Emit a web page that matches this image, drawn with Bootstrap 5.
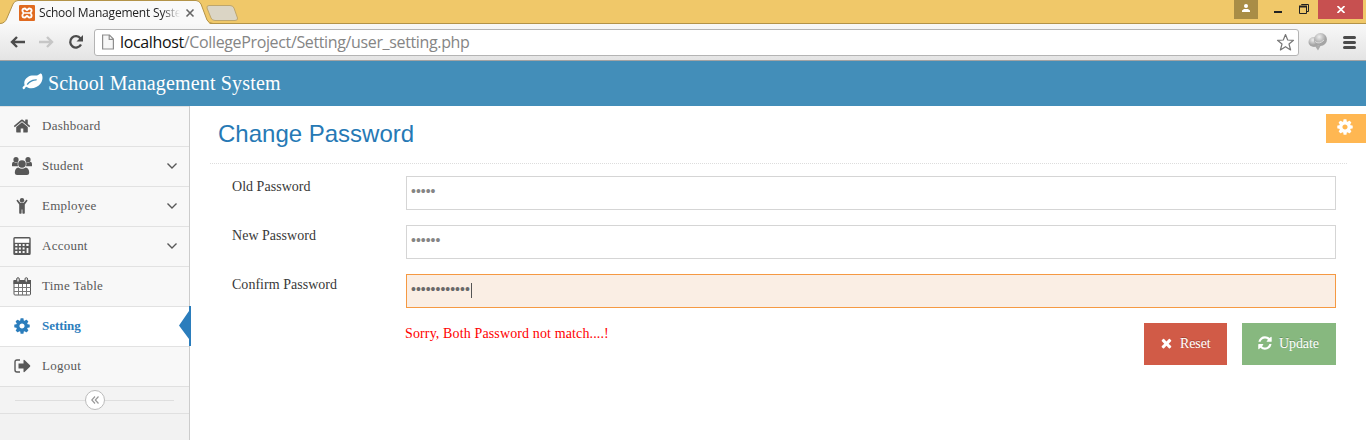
<!DOCTYPE html>
<html lang="en">
<head>
<meta charset="utf-8">
<title>School Management System</title>
<meta name="viewport" content="width=device-width, initial-scale=1">
<link href="https://cdn.jsdelivr.net/npm/bootstrap@5.3.0/dist/css/bootstrap.min.css" rel="stylesheet">
<style>
body{font-family:"Liberation Serif",serif;font-size:14px;line-height:20px;color:#393939;height:440px;overflow:hidden}
svg{display:block;flex:none}
.ui-font{font-family:"Open Sans",sans-serif}
.titlebar{height:24px;background:#f0c869}
.tab-art{top:0;left:0}
.tab-label{width:142px;margin-left:4px;font-size:12px;letter-spacing:-.2px;line-height:26px;color:#222;white-space:nowrap;overflow:hidden;-webkit-mask-image:linear-gradient(90deg,#000 123px,transparent 141px)}
.win-user{width:24px;height:19px;background:#a98d46;margin-right:16px}
.win-close{width:45px;height:19px;background:#c75050;margin:0 3px 0 -16px}
.toolbar{height:37px;background:linear-gradient(#f8f8f8,#e4e4e4);border-bottom:1px solid #a3a3a3;padding:0 9px 0 9px}
.address{height:27px;border:1px solid #b4b4b4;border-radius:3px;background:#fff;margin-left:10px;padding:0 3px 0 7px}
.address-text{font-size:16px;letter-spacing:-.36px;color:#858585;margin-left:6px;line-height:24px}
.address-text b{font-weight:400;color:#111}
.brandbar{height:45px;background:#438eb9;color:#fff;padding:0 0 1px 22px}
.brandbar span{font-size:20px;letter-spacing:.16px;margin-left:6px}
.sidebar{width:190px;background:#f2f2f2;border-right:1px solid #ccc;flex:none}
.side-link{height:40px;border-top:1px solid #e2e2e2;background:#f8f8f8;color:#585858;padding:0 11px 1px;font-size:13px;letter-spacing:.24px;text-decoration:none}
.side-link .ico{width:22px;margin-right:9px;display:flex;justify-content:center}
.side-link.current{background:#fff;color:#2b7dbc;font-weight:700;letter-spacing:-.05px}
.side-mark{right:-2px;top:-1px}
.collapse-row{height:28px;border-top:1px solid #e0e0e0;border-bottom:1px solid #e0e0e0;background:#f3f3f3;padding:0 15px}
.collapse-row i{height:1px;background:#dedede;flex:1}
.collapse-btn{width:20px;height:20px;border:1px solid #bbb;border-radius:50%;background:#fff}
.gear-btn{width:40px;height:29px;background:#ffb752;right:0;top:8px}
.page-head{height:58px;margin:0 19px 0 20px;padding:13px 8px 0;border-bottom:1px dotted #ddd}
.page-head h1{font-family:"Liberation Sans",sans-serif;font-size:24px;line-height:30px;color:#2679b5;font-weight:400;margin:0}
.pw-form{padding:12px 30px 0 42px}
.pw-row{height:34px;margin-bottom:15px}
.pw-row label{width:174px;padding-top:1px;letter-spacing:.03px;flex:none}
.pw-input.form-control{height:34px;border:1px solid #d5d5d5;border-radius:0;padding:0 4px 4px 4px;font:14px "Liberation Sans",sans-serif;color:#858585;box-shadow:none}
.pw-input.form-control.active-field{border-color:#f59942;background:#faeee4;color:#696969}
.caret{left:65px;top:9px;width:1px;height:15px;background:#555}
.error-text{color:#f00;padding:1px 0 0 173px;letter-spacing:.13px;flex:1}
.act{height:42px;border:0;border-radius:0;color:#fff;font-size:14px;letter-spacing:-.1px;padding:0 16px 2px;text-shadow:0 -1px 0 rgba(0,0,0,.25)}
.act-reset,.act-reset:hover{background:#d15b47;color:#fff;width:83px}
.act-update,.act-update:hover{background:#87b87f;color:#fff;width:94px;margin-left:15px}
</style>
</head>
<body class="bg-white d-flex flex-column">
<svg width="0" height="0" class="position-absolute"><defs>
<path id="cog" d="M1152 896q0-106-75-181t-181-75-181 75-75 181 75 181 181 75 181-75 75-181zm512-109v222q0 12-8 23t-20 13l-185 28q-19 54-39 91 35 50 107 138 10 12 10 25t-9 23q-27 37-99 108t-94 71q-12 0-26-9l-138-108q-44 23-91 38-16 136-29 186-7 28-36 28h-222q-14 0-24.500-8.500t-11.500-21.500l-28-184q-49-16-90-37l-141 107q-10 9-25 9-14 0-25-11-126-114-165-168-7-10-7-23 0-12 8-23 15-21 51-66.500t54-70.500q-27-50-41-99l-183-27q-13-2-21-12.500t-8-23.500v-222q0-12 8-23t19-13l186-28q14-46 39-92-40-57-107-138-10-12-10-24 0-10 9-23 26-36 98.500-107.500t94.500-71.500q13 0 26 10l138 107q44-23 91-38 16-136 29-186 7-28 36-28h222q14 0 24.500 8.500t11.500 21.500l28 184q49 16 90 37l142-107q9-9 24-9 13 0 25 10 129 119 165 170 7 8 7 22 0 12-8 23-15 21-51 66.500t-54 70.500q26 50 41 98l183 28q13 2 21 12.500t8 23.500z"/>
<path id="chev" d="M1.500 1.500 6 6 10.500 1.500" fill="none" stroke="#585858" stroke-width="1.400"/>
</defs></svg>

<header class="ui-font">
  <div class="titlebar d-flex align-items-start position-relative">
    <svg class="position-absolute tab-art" width="1366" height="26" viewBox="0 0 1366 26">
      <path d="M0 23.500H1366" stroke="#b39348"/>
      <path d="M0 25V23.500Q5 23.500 7 18L13 4Q14.500.5 18 .5H196Q199 .5 201 4L207 20Q209 24.500 213 24.500V26H0Z" fill="#f9f9f9"/>
      <path d="M0 23.500Q5 23.500 7 18L13 4Q14.500.5 18 .5H196Q199 .5 201 4L207 20Q209 23.500 213 23.500" fill="none" stroke="#b39348"/>
      <path d="M209 5.500H230Q233 5.500 234 8L237.500 18Q238 20.500 235 20.500H215Q212 20.500 211 18L207 8Q206.500 5.500 209 5.500Z" fill="#dbd5c5" stroke="#bea66c"/>
    </svg>
    <div class="d-flex align-items-center position-relative w-100">
      <svg width="16" height="16" viewBox="0 0 16 16" style="margin-left:19px"><rect width="16" height="16" rx="1" fill="#e06a20"/><path d="M5.500 3.500C3 3.500 2.500 6.500 5 8 2.500 9.500 3 12.500 5.500 12.500 7 12.500 7 11 8 11S9 12.500 10.500 12.500C13 12.500 13.500 9.500 11 8 13.500 6.500 13 3.500 10.500 3.500 9 3.500 9 5 8 5S7 3.500 5.500 3.500Z" fill="none" stroke="#fff" stroke-width="1.900"/><path d="M6 8H10" stroke="#fff" stroke-width="1.500"/></svg>
      <span class="tab-label">School Management System</span>
      <svg width="10" height="10" viewBox="0 0 10 10" style="margin-left:4px"><path d="M1.500 1.500 8.500 8.500M8.500 1.500 1.500 8.500" stroke="#666" stroke-width="1.600"/></svg>
      <div class="d-flex ms-auto align-self-start">
        <div class="win-user d-flex justify-content-center pt-1"><svg width="10" height="9" viewBox="0 0 10 9" fill="#fff"><circle cx="5" cy="2" r="2"/><path d="M1 8V6.500L3 5H7L9 6.500V8Z"/></svg></div>
        <svg width="60" height="19" viewBox="0 0 60 19" fill="none" stroke="#222"><path d="M0 12H8" stroke-width="2"/><path d="M25.500 6.500H32.500V13.500H25.500Z" stroke-width="1"/><path d="M25 6.500H33" stroke-width="2"/><path d="M27.500 5V4.500H34.500V11.500H33"/></svg>
        <div class="win-close d-flex justify-content-center align-items-center"><svg width="8" height="7" viewBox="0 0 8 7"><path d="M.5 0 7.500 7M7.500 0 .5 7" stroke="#fff" stroke-width="1.700"/></svg></div>
      </div>
    </div>
  </div>
  <div class="toolbar d-flex align-items-center position-relative">
    <svg width="75" height="18" viewBox="0 0 75 18" fill="none"><path d="M16 9H3M8 4 3 9 8 14" stroke="#4c4c4c" stroke-width="2.400"/><path d="M30 9H43M38 4 43 9 38 14" stroke="#c6c6c6" stroke-width="2.400"/><path d="M71.500 5.500A5.700 5.700 0 1 0 72 11.500" stroke="#4c4c4c" stroke-width="2.300"/><path d="M74 2V8.500H67.500Z" fill="#4c4c4c"/></svg>
    <div class="address d-flex align-items-center flex-grow-1">
      <svg width="12" height="16" viewBox="0 0 12 16"><path d="M.6 1H7.500L11.400 5V15H.6ZM7.200 1V5.300H11" fill="#f7f7f7" stroke="#8d8d8d" stroke-width="1.200"/></svg>
      <span class="address-text"><b>localhost</b>/CollegeProject/Setting/user_setting.php</span>
      <svg class="ms-auto" width="19" height="19" viewBox="0 0 19 19"><path d="M9.500 1.500 11.700 7 17.500 7.300 13 11 14.600 17 9.500 13.700 4.400 17 6 11 1.500 7.300 7.300 7Z" fill="#fff" stroke="#777" stroke-width="1.200" stroke-linejoin="round"/></svg>
    </div>
    <svg width="20" height="20" viewBox="0 0 20 20" style="margin-left:9px"><defs><radialGradient id="ball" cx=".4" cy=".3"><stop stop-color="#eee"/><stop offset="1" stop-color="#a5a5a5"/></radialGradient></defs><ellipse cx="6" cy="10" rx="5.500" ry="5" fill="url(#ball)"/><path d="M7 14 10 18.500 13 13Z" fill="#aaa"/><circle cx="12.500" cy="7.500" r="6.500" fill="url(#ball)"/><path d="M7 9.500Q11 13 16 8" stroke="#ddd" fill="none"/></svg>
    <svg width="13" height="13" viewBox="0 0 13 13" style="margin-left:15px;margin-right:1px"><path d="M1.500 1.500H11.500M1.500 6.500H11.500M1.500 11.500H11.500" stroke="#4b4b4b" stroke-width="3" stroke-linecap="round"/></svg>
  </div>
</header>

<nav class="brandbar d-flex align-items-center flex-shrink-0">
  <svg width="21" height="20" viewBox="0 90 1792 1792" fill="#fff"><path d="M1280 704q0-26-19-45t-45-19q-172 0-318 49.500t-259.500 134-235.500 219.500q-19 21-19 45 0 26 19 45t45 19q24 0 45-19 27-24 74-71t67-66q137-124 268.500-176t313.500-52q26 0 45-19t19-45zm512-198q0 95-20 193-46 224-184.500 383t-357.500 268q-214 108-438 108-148 0-286-47-15-5-88-42t-96-37q-16 0-39.500 32t-45 70-52.500 70-60 32q-43 0-63.500-17.500t-45.500-59.500q-2-4-6-11t-5.500-10-3-9.500-1.500-13.500q0-35 31-73.500t68-65.500 68-56 31-48q0-4-14-38t-16-44q-9-51-9-104 0-115 43.500-220t119-184.500 170.500-139 204-95.500q55-18 145-25.500t179.500-9 178.500-6 163.500-24 113.500-56.500l29.500-29.500 29.500-28 27-20 36.500-16 43.500-4.500q39 0 70.500 46t47.500 112 24 124 8 96z"/></svg>
  <span style="margin-left:5px">School Management System</span>
</nav>

<div class="d-flex flex-grow-1">
  <aside class="sidebar">
    <a class="side-link d-flex align-items-center" href="#"><span class="ico"><svg width="18" height="18" viewBox="0 0 1792 1792" fill="#585858"><path d="M1472 992v480q0 26-19 45t-45 19h-384v-384h-256v384h-384q-26 0-45-19t-19-45v-480q0-1 .5-3t.5-3l575-474 575 474q1 2 1 6zm223-69l-62 74q-8 9-21 11h-3q-13 0-21-7l-692-577-692 577q-12 8-24 7-13-2-21-11l-62-74q-8-10-7-23.500t11-21.500l719-599q32-26 76-26t76 26l244 204v-195q0-14 9-23t23-9h192q14 0 23 9t9 23v408l219 182q10 8 11 21.500t-7 23.500z"/></svg></span>Dashboard</a>
    <a class="side-link d-flex align-items-center" href="#"><span class="ico"><svg width="20" height="18" viewBox="0 0 20 18" fill="#585858"><circle cx="4" cy="2.700" r="2.600"/><circle cx="16" cy="2.700" r="2.600"/><path d="M0 9V7Q0 5 1.500 4.800L3.500 5.800 6 5.300Q5 7.300 6 9.300H1Q0 9.300 0 9ZM20 9V7Q20 5 18.500 4.800L16.500 5.800 14 5.300Q15 7.300 14 9.300H19Q20 9.300 20 9Z"/><circle cx="10" cy="7" r="3.800"/><path d="M6.300 10.500Q10 13 13.700 10.500 17.200 11 17.200 16 17 18 15 18H5Q3 18 2.800 16 2.800 11 6.300 10.500Z"/></svg></span>Student<svg class="ms-auto" width="12" height="8"><use href="#chev"/></svg></a>
    <a class="side-link d-flex align-items-center" href="#"><span class="ico"><svg width="12" height="16" viewBox="0 0 12 16" fill="#585858"><circle cx="6" cy="2.300" r="2.200"/><path d="M1.700 1.700 4.300 4.800H7.700L10.300 1.700Q11.300 1.500 11.500 2.700L8.800 6.500V15.200Q7.500 16.300 6.400 15.200V11.500H5.600V15.200Q4.500 16.300 3.200 15.200V6.500L.5 2.700Q.7 1.500 1.700 1.700Z"/></svg></span>Employee<svg class="ms-auto" width="12" height="8"><use href="#chev"/></svg></a>
    <a class="side-link d-flex align-items-center" href="#"><span class="ico"><svg width="18" height="18" viewBox="0 0 18 18"><rect x="1" y=".7" width="16" height="16.600" rx=".8" fill="#fff" stroke="#585858" stroke-width="1.400"/><path d="M1 5.800H17V17H1Z" fill="#585858"/><path d="M2.200 7h2.200v2H2.200zm3.700 0h2v2h-2zm3.700 0h2v2h-2zm3.700 0h2.300v2h-2.300zM2.200 10.400h2.200v2H2.200zm3.700 0h2v2h-2zm3.700 0h2v2h-2zM2.200 14h2.200v2H2.200zm3.700 0h2v2h-2zm3.700 0h2v2h-2zm4-3h1.800v5h-1.800z" fill="#f8f8f8"/></svg></span>Account<svg class="ms-auto" width="12" height="8"><use href="#chev"/></svg></a>
    <a class="side-link d-flex align-items-center" href="#"><span class="ico"><svg width="18" height="19" viewBox="0 0 18 19"><rect x="1" y="3.500" width="16.500" height="14.500" rx="1" fill="#fff" stroke="#585858"/><path d="M.5 3H18V7H.5Z" fill="#585858"/><path d="M5.500 7V18M9.500 7V18M13.500 7V18M1 10.500H17.500M1 14.500H17.500" stroke="#777"/><rect x="3.700" y=".7" width="2.600" height="4.600" rx="1.300" fill="#ddd" stroke="#585858"/><rect x="12" y=".7" width="2.600" height="4.600" rx="1.300" fill="#ddd" stroke="#585858"/></svg></span>Time Table</a>
    <a class="side-link current d-flex align-items-center position-relative" href="#"><span class="ico"><svg width="18" height="18" viewBox="0 0 1792 1792" fill="#2b7dbc"><use href="#cog"/></svg></span>Setting<svg class="position-absolute side-mark" width="12" height="40"><path d="M10 0H12V40H10V33L0 19.500 10 5Z" fill="#2b7dbc"/></svg></a>
    <a class="side-link d-flex align-items-center" href="#"><span class="ico"><svg width="17" height="14" viewBox="0 0 17 14"><path d="M6 1H3Q1 1 1 3V11Q1 13 3 13H6" fill="none" stroke="#585858" stroke-width="1.400"/><path d="M4.500 4.500H9.500V1.500Q9.500.5 10.500 1L16 6.300Q16.600 7 16 7.700L10.500 13Q9.500 13.500 9.500 12.500V9.500H4.500Z" fill="#585858"/></svg></span>Logout</a>
    <div class="collapse-row d-flex align-items-center"><i></i><span class="collapse-btn d-flex justify-content-center align-items-center"><svg width="8" height="8" viewBox="0 0 8 8"><path d="M4 .5.800 4 4 7.500M7.500.5 4.300 4 7.500 7.500" fill="none" stroke="#999" stroke-width="1.200"/></svg></span><i></i></div>
  </aside>

  <main class="flex-grow-1 position-relative">
    <div class="gear-btn position-absolute d-flex justify-content-center"><svg width="18" height="18" viewBox="0 0 1792 1792" fill="#fff" style="margin-top:4px;margin-right:3px"><use href="#cog"/></svg></div>
    <div class="page-head"><h1>Change Password</h1></div>
    <form class="pw-form">
      <div class="pw-row d-flex"><label for="p1">Old Password</label><input id="p1" type="password" class="form-control pw-input" value="abcde"></div>
      <div class="pw-row d-flex"><label for="p2">New Password</label><input id="p2" type="password" class="form-control pw-input" value="abcdef"></div>
      <div class="pw-row d-flex"><label for="p3">Confirm Password</label><div class="position-relative w-100"><input id="p3" type="password" class="form-control pw-input active-field" value="abcdefghijkl"><span class="caret position-absolute"></span></div></div>
      <div class="d-flex">
        <div class="error-text">Sorry, Both Password not match....!</div>
        <button type="button" class="btn act act-reset d-flex align-items-center"><svg width="13" height="13" viewBox="200 140 1400 1600" fill="#fff"><path d="M1490 1322q0 40-28 68l-136 136q-28 28-68 28t-68-28l-294-294-294 294q-28 28-68 28t-68-28l-136-136q-28-28-28-68t28-68l294-294-294-294q-28-28-28-68t28-68l136-136q28-28 68-28t68 28l294 294 294-294q28-28 68-28t68 28l136 136q28 28 28 68t-28 68l-294 294 294 294q28 28 28 68z"/></svg><span style="padding-left:7px">Reset</span></button>
        <button type="button" class="btn act act-update d-flex align-items-center"><svg width="14" height="14" viewBox="100 100 1600 1600" fill="#fff"><path d="M1639 1056q0 5-1 7-64 268-268 434.500t-478 166.500q-146 0-282.500-55t-243.500-157l-129 129q-19 19-45 19t-45-19-19-45v-448q0-26 19-45t45-19h448q26 0 45 19t19 45-19 45l-137 137q71 66 161 102t187 36q134 0 250-65t186-179q11-17 53-117 8-23 30-23h192q13 0 22.500 9.500t9.500 22.500zm25-800v448q0 26-19 45t-45 19h-448q-26 0-45-19t-19-45 19-45l138-138q-148-137-349-137-134 0-250 65t-186 179q-11 17-53 117-8 23-30 23h-199q-13 0-22.500-9.500t-9.500-22.500v-7q65-268 270-434.500t480-166.500q146 0 284 55.500t245 156.500l130-129q19-19 45-19t45 19 19 45z"/></svg><span style="padding-left:7px">Update</span></button>
      </div>
    </form>
  </main>
</div>
<script src="https://cdn.jsdelivr.net/npm/bootstrap@5.3.0/dist/js/bootstrap.bundle.min.js"></script>
</body>
</html>
